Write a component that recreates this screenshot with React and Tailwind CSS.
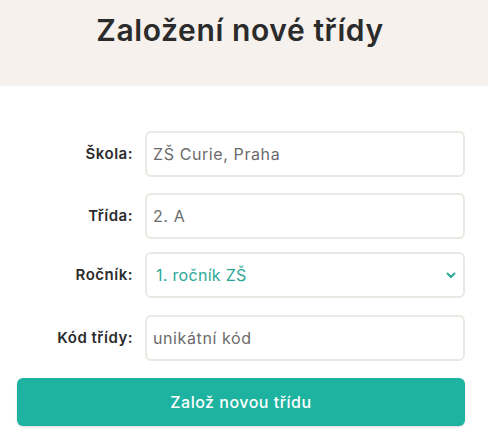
export default function App() {
  const font = { fontFamily: "Inter, 'Noto Sans', sans-serif" };
  const labelCls = "w-[128px] pr-[12px] text-right text-[15px] tracking-[0.5px] font-semibold text-[#2b2b2b]";
  const boxCls = "flex-1 h-[46px] border-2 border-[#ebe7e3] rounded-[6px] flex items-center px-[6px] text-[16px] tracking-[0.6px] text-[#6b6b6b]";
  return (
    <div className="w-[488px] h-[441px] bg-white overflow-hidden" style={font}>
      <div className="h-[86px] bg-[#f6f1ed] flex justify-center pt-[10px] pr-[8px]">
        <h1 className="text-[30px] leading-[40px] font-semibold text-[#2b2b2b] tracking-[0.6px]">Založení nové třídy</h1>
      </div>
      <div className="pt-[45px] px-[17px]">
        <div className="flex flex-col gap-[16px] pr-[6px]">
          <div className="flex items-center">
            <label className={labelCls}>Škola:</label>
            <div className={boxCls}>ZŠ Curie, Praha</div>
          </div>
          <div className="flex items-center">
            <label className={labelCls}>Třída:</label>
            <div className={boxCls}>2. A</div>
          </div>
          <div className="flex items-center mt-[-3px]">
            <label className={labelCls}>Ročník:</label>
            <div className="flex-1 h-[46px] border-2 border-[#ebe7e3] rounded-[6px] flex items-center px-[9px] text-[16px] tracking-[0.3px] text-[#2aa897]">
              <span className="flex-1">1. ročník ZŠ</span>
              <svg width="10" height="7" viewBox="0 0 10 7" className="mr-[-2px]">
                <path d="M1.5 1.5 L5 5 L8.5 1.5" fill="none" stroke="#2aa897" strokeWidth="2" strokeLinecap="round" strokeLinejoin="round" />
              </svg>
            </div>
          </div>
          <div className="flex items-center mt-[1px]">
            <label className={labelCls}>Kód třídy:</label>
            <div className={boxCls}>unikátní kód</div>
          </div>
        </div>
        <button className="mt-[17px] w-[448px] h-[48px] rounded-[6px] bg-[#1db3a0] text-white text-[16px] tracking-[0.5px] font-medium shadow-[0_1px_2px_rgba(0,0,0,0.15)]" style={font}>Založ novou třídu</button>
      </div>
    </div>
  );
}
